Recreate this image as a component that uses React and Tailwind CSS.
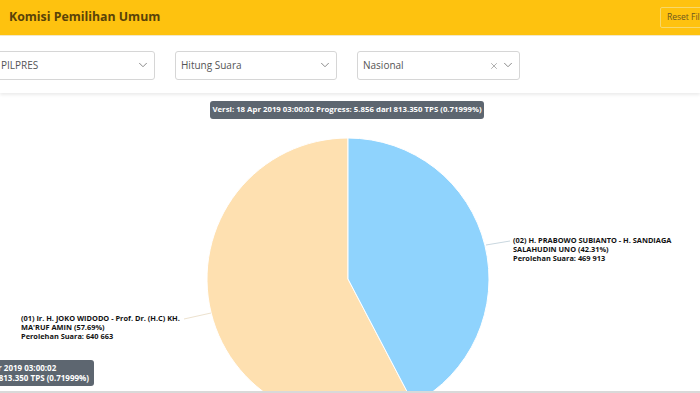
import { ChevronDown, X } from 'lucide-react'

const selects = [
  { label: 'PILPRES', cls: 'w-[163px] -ml-[8px]', clear: false },
  { label: 'Hitung Suara', cls: 'w-[162px]', clear: false },
  { label: 'Nasional', cls: 'w-[163px]', clear: true },
]

// pie geometry (chart-area coordinates)
const cx = 348
const cy = 186
const r = 141
const share = 0.4231
const ang = share * 2 * Math.PI
const ex = cx + r * Math.sin(ang)
const ey = cy - r * Math.cos(ang)

const PieChart = () => (
  <svg width="700" height="300" className="absolute inset-0">
    <path
      d={`M ${cx} ${cy} L ${ex} ${ey} A ${r} ${r} 0 1 1 ${cx} ${cy - r} Z`}
      fill="#fee0b0"
      stroke="#ffffff"
      strokeWidth="1"
    />
    <path
      d={`M ${cx} ${cy} L ${cx} ${cy - r} A ${r} ${r} 0 0 1 ${ex} ${ey} Z`}
      fill="#8fd3fd"
      stroke="#ffffff"
      strokeWidth="1"
    />
    <line x1="486" y1="152" x2="510" y2="148" stroke="#c9d7df" strokeWidth="1" />
    <line x1="211" y1="220" x2="184" y2="226" stroke="#ede2cf" strokeWidth="1" />
  </svg>
)

export default function App() {
  return (
    <div className="w-[700px] h-[393px] overflow-hidden bg-white flex flex-col" style={{ fontFamily: '"Open Sans", "Noto Sans", sans-serif' }}>
      {/* Header */}
      <div className="h-[36px] shrink-0 bg-[#fec20f] flex items-center justify-between pl-[9px] border-b border-[#f3e9c9]">
        <h1 className="text-[12.3px] font-bold text-[#5a4208]">Komisi Pemilihan Umum</h1>
        <button className="h-[21px] px-[6px] mr-[-18px] border border-[#f7d86a] rounded-[2px] text-[8.5px] text-[#6b5520] bg-[#fec20f] flex items-center">
          Reset Filter
        </button>
      </div>

      {/* Filters */}
      <div className="h-[57px] shrink-0 bg-white flex items-center gap-[20px] shadow-[0_2px_3px_rgba(0,0,0,0.08)] relative z-10">
        {selects.map((s) => (
          <div
            key={s.label}
            className={`${s.cls} h-[29px] mt-[1px] border border-[#d6d6d6] rounded-[3px] flex items-center pl-[5px] pr-[4px] text-[10px] text-[#555]`}
          >
            <span className={s.label === 'PILPRES' ? 'pl-[3px] flex-1' : 'flex-1'}>{s.label}</span>
            {s.clear && <X size={10} strokeWidth={1.6} className="text-[#888] mr-[2px] mt-[2px]" />}
            <ChevronDown size={14} strokeWidth={1.7} className="text-[#8a8a8a]" />
          </div>
        ))}
      </div>

      {/* Chart area */}
      <div className="relative flex-1">
        <PieChart />

        <div className="absolute top-[8px] left-0 right-0 flex justify-center">
          <div className="ml-[-6px] h-[18px] w-[274px] justify-center rounded-[3px] bg-[#5d6670] text-white text-[7.8px] font-bold flex items-center whitespace-nowrap">
            Versi: 18 Apr 2019 03:00:02 Progress: 5.856 dari 813.350 TPS (0.71999%)
          </div>
        </div>

        <div className="absolute left-[513px] top-[143px] text-[7.4px] leading-[9px] font-bold text-[#111]">
          <div>(02) H. PRABOWO SUBIANTO - H. SANDIAGA</div>
          <div>SALAHUDIN UNO (42.31%)</div>
          <div>Perolehan Suara: 469 913</div>
        </div>

        <div className="absolute left-[21px] top-[221px] text-[7.4px] leading-[9px] font-bold text-[#111]">
          <div>(01) Ir. H. JOKO WIDODO - Prof. Dr. (H.C) KH.</div>
          <div>MA'RUF AMIN (57.69%)</div>
          <div>Perolehan Suara: 640 663</div>
        </div>

        <div className="absolute right-[606px] top-[267px] rounded-[3px] bg-[#5d6670] text-white text-[8px] leading-[10px] font-bold text-center px-[5px] py-[3px] whitespace-nowrap">
          <div>Versi: 18 Apr 2019 03:00:02</div>
          <div>Progress: 5.856 dari 813.350 TPS (0.71999%)</div>
        </div>

        <div className="absolute left-0 right-0 bottom-0 h-[2px] bg-[#d9d9d9]" />
      </div>
    </div>
  )
}
